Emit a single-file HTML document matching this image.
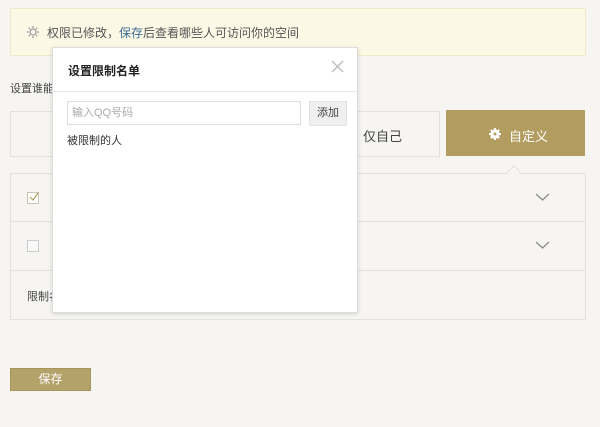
<!DOCTYPE html>
<html><head><meta charset="utf-8"><style>
*{margin:0;padding:0;box-sizing:border-box}
body{width:600px;height:427px;background:#f6f5f2;font-family:"Liberation Sans","Noto Sans CJK SC",sans-serif;font-size:12px;color:#333;position:relative;overflow:hidden}
.a{position:absolute}
</style></head><body>
<div class="a" style="left:10px;top:8px;width:576px;height:48px;background:#fcf8e6;border:1px solid #f0e9cc"></div>
<svg class="a" style="left:27px;top:26px" width="12" height="12" viewBox="0 0 12 12"><circle cx="6" cy="6" r="3" fill="none" stroke="#999" stroke-width="1.2"/><g stroke="#999" stroke-width="1.2"><line x1="6" y1="0" x2="6" y2="2"/><line x1="6" y1="10" x2="6" y2="12"/><line x1="0" y1="6" x2="2" y2="6"/><line x1="10" y1="6" x2="12" y2="6"/><line x1="1.8" y1="1.8" x2="3.2" y2="3.2"/><line x1="8.8" y1="8.8" x2="10.2" y2="10.2"/><line x1="1.8" y1="10.2" x2="3.2" y2="8.8"/><line x1="8.8" y1="3.2" x2="10.2" y2="1.8"/></g></svg>
<div class="a" style="left:47px;top:24px;color:#555">权限已修改，<span style="color:#3d6b95">保存</span>后查看哪些人可访问你的空间</div>
<div class="a" style="left:10px;top:80px;font-size:11px;color:#444">设置谁能访问</div>
<div class="a" style="left:10px;top:111px;width:430px;height:46px;border:1px solid #e3e1dc;background:#f6f5f2"></div>
<div class="a" style="left:363px;top:126px;font-size:13px;color:#444">仅自己</div>
<div class="a" style="left:446px;top:110px;width:139px;height:46px;background:#b29c60"></div>
<svg class="a" style="left:489px;top:128px" width="12" height="12" viewBox="0 0 12 12"><circle cx="6" cy="6" r="3.5" fill="none" stroke="#fff" stroke-width="2.2"/><g stroke="#fff" stroke-width="2"><line x1="6" y1="0" x2="6" y2="12"/><line x1="0" y1="6" x2="12" y2="6"/><line x1="1.8" y1="1.8" x2="10.2" y2="10.2"/><line x1="1.8" y1="10.2" x2="10.2" y2="1.8"/></g><circle cx="6" cy="6" r="1.5" fill="#b29c60"/></svg>
<div class="a" style="left:509px;top:126px;font-size:13px;color:#fff">自定义</div>
<div class="a" style="left:10px;top:173px;width:576px;height:147px;border:1px solid #e3e1dc;background:#f6f5f2"></div>
<div class="a" style="left:10px;top:221px;width:576px;height:1px;background:#e3e1dc"></div>
<div class="a" style="left:10px;top:270px;width:576px;height:1px;background:#e3e1dc"></div>
<div class="a" style="left:509px;top:167px;width:10px;height:10px;background:#f6f5f2;border-left:1px solid #e3e1dc;border-top:1px solid #e3e1dc;transform:rotate(45deg)"></div>
<div class="a" style="left:27px;top:192px;width:12px;height:12px;border:1px solid #c9c3b3;background:#fff"></div>
<svg class="a" style="left:28px;top:191px" width="12" height="12"><path d="M2 6 L5 9 L10 2" fill="none" stroke="#b29c60" stroke-width="1.2"/></svg>
<div class="a" style="left:27px;top:240px;width:12px;height:12px;border:1px solid #ccc;background:#f9f9f9"></div>
<svg class="a" style="left:535px;top:192px" width="15" height="10"><path d="M1 2 L7.5 8 L14 2" fill="none" stroke="#888" stroke-width="1.2"/></svg>
<svg class="a" style="left:535px;top:240px" width="15" height="10"><path d="M1 2 L7.5 8 L14 2" fill="none" stroke="#888" stroke-width="1.2"/></svg>
<div class="a" style="left:27px;top:288px;font-size:11px;color:#444">限制名单</div>
<div class="a" style="left:10px;top:368px;width:81px;height:23px;background:#b4a26b;border:1px solid #a8955c;color:#fff;text-align:center;line-height:21px">保存</div>
<div class="a" style="left:52px;top:47px;width:306px;height:266px;background:#fff;border:1px solid #ddd;box-shadow:0 1px 4px rgba(0,0,0,.15)"></div>
<div class="a" style="left:68px;top:62px;font-weight:bold;color:#222">设置限制名单</div>
<svg class="a" style="left:331px;top:60px" width="13" height="13"><path d="M1 1 L12 12 M12 1 L1 12" stroke="#bbb" stroke-width="1.3"/></svg>
<div class="a" style="left:53px;top:91px;width:304px;height:1px;background:#e8e8e8"></div>
<div class="a" style="left:67px;top:101px;width:234px;height:24px;border:1px solid #ddd;background:#fff;color:#aaa;font-size:11px;padding-left:4px;line-height:22px">输入QQ号码</div>
<div class="a" style="left:309px;top:101px;width:38px;height:25px;background:#efefef;border:1px solid #e2e2e2;text-align:center;line-height:23px;font-size:11px;color:#444">添加</div>
<div class="a" style="left:67px;top:132px;font-size:11px;color:#333">被限制的人</div>
</body></html>
